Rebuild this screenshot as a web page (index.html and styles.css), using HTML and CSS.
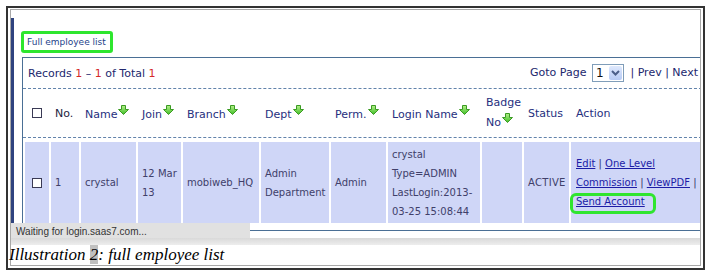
FILE: index.html
```html
<!DOCTYPE html>
<html lang="en">

<head>
 <meta charset="UTF-8">
 <meta name="viewport" content="width=device-width, initial-scale=1.0">
 <title>Illustration 2: full employee list</title>
 <link rel="stylesheet" href="styles.css">
</head>

<body>
 <!-- shared sort arrow -->
 <svg width="0" height="0" style="position:absolute">
  <defs>
   <linearGradient id="arrowFill" x1="0" y1="0" x2="0" y2="1">
    <stop offset="0" stop-color="#b6f08a" />
    <stop offset="1" stop-color="#3fbe27" />
   </linearGradient>
   <symbol id="arrow" viewBox="0 0 11 10">
    <path d="M3.5 0.5H7.5V4.5H10.5L5.5 9.5L0.5 4.5H3.5Z" fill="url(#arrowFill)" stroke="#3a9a22" stroke-width="1" stroke-linejoin="round" />
   </symbol>
  </defs>
 </svg>

 <div class="frame">
  <div class="shot">
   <div class="viewport">
    <div class="page">
     <a href="#" class="page-title">Full employee list</a>

     <div class="listbox">
      <div class="pager">
       <div>Records <span class="num">1</span> &ndash; <span class="num">1</span> of Total <span class="num">1</span></div>
       <div>
        Goto Page
        <span class="select">
         <span class="select-val">1</span>
         <span class="select-btn">
          <svg width="13" height="14" viewBox="0 0 13 14"><path d="M3 5L6.5 8.5L10 5" fill="none" stroke="#4b5f8a" stroke-width="2" /></svg>
         </span>
        </span>
        | <a href="#">Prev</a> | <a href="#">Next</a>
       </div>
      </div>

      <div class="grid head">
       <div class="center"><span class="chk"></span></div>
       <div class="plain">No.</div>
       <div><a href="#">Name</a><svg class="sort"><use href="#arrow" /></svg></div>
       <div><a href="#">Join</a><svg class="sort"><use href="#arrow" /></svg></div>
       <div><a href="#">Branch</a><svg class="sort"><use href="#arrow" /></svg></div>
       <div><a href="#">Dept</a><svg class="sort"><use href="#arrow" /></svg></div>
       <div><a href="#">Perm.</a><svg class="sort"><use href="#arrow" /></svg></div>
       <div><a href="#">Login Name</a><svg class="sort"><use href="#arrow" /></svg></div>
       <div class="two-line"><a href="#">Badge<br>No</a><svg class="sort"><use href="#arrow" /></svg></div>
       <div>Status</div>
       <div class="act-head">Action</div>
      </div>

      <div class="grid row">
       <div class="center"><span class="chk"></span></div>
       <div>1</div>
       <div>crystal</div>
       <div>12 Mar 13</div>
       <div>mobiweb_HQ</div>
       <div>Admin Department</div>
       <div>Admin</div>
       <div>crystal<br>Type=ADMIN<br>LastLogin:2013-<br>03-25 15:08:44</div>
       <div></div>
       <div class="status-cell">ACTIVE</div>
       <div class="actions">
        <p>
         <a href="#">Edit</a> | <a href="#">One Level<br>Commission</a> | <a href="#">ViewPDF</a> |<br>
         <span class="mark"><a href="#">Send Account</a></span>
        </p>
       </div>
      </div>
     </div>
    </div>

    <div class="statusbar">Waiting for login.saas7.com...</div>
   </div>
   <div class="band"></div>
   <div class="caption">Illustration <span class="field">2</span>: full employee list</div>
  </div>
 </div>
</body>

</html>
```

FILE: styles.css
```css
body {
 margin: 0;
 background-color: #fff;
 font-family: "DejaVu Sans", Verdana, sans-serif;
}

a {
 color: inherit;
 text-decoration: none;
}

.frame {
 margin: 6px 0 0 6px;
 width: 695px;
 height: 260px;
 border: 2px solid #333;
}

.shot {
 margin: 1px 2px 2px 2px;
 border: 1px solid #a8a8a8;
}

.viewport {
 position: relative;
 height: 228px;
 overflow: hidden;
}

.page {
 margin-top: 8px;
 min-height: 260px;
 border-left: 3px solid #2f437e;
 padding: 13px 0 0 7px;
}

.page-title {
 display: block;
 width: max-content;
 border: 3px solid #2ee62e;
 border-radius: 3px;
 padding: 3px 4px 2px 3px;
 font-size: 9px;
 line-height: 11px;
 color: #24428a;
}

.listbox {
 margin: 4px -12px 0 1px;
 padding-bottom: 7px;
 border: 1px solid #4a6f95;
 border-right: none;
}

.pager {
 display: flex;
 justify-content: space-between;
 align-items: center;
 height: 30px;
 padding: 0 14px 0 5px;
 border-bottom: 1px dashed #6283ab;
 font-size: 11px;
 color: #22286e;
}

.num {
 color: #d42a2a;
}

/* fake XP style dropdown */
.select {
 display: inline-flex;
 vertical-align: middle;
 box-sizing: border-box;
 width: 32px;
 height: 18px;
 margin: 0 3px 0 2px;
 border: 1px solid #7f9db9;
 background-color: #fff;
}

.select-val {
 flex: 1;
 padding-left: 3px;
 font-size: 12px;
 line-height: 16px;
 color: #111;
}

.select-btn {
 width: 13px;
 margin: 1px;
 border-radius: 2px;
 background: linear-gradient(#dfe9fd, #b7cbf5);
}

.select-btn svg {
 display: block;
}

.grid {
 display: grid;
 grid-template-columns: 24px 28px 55px 43px 76px 68px 55px 92px 40px 45px 1fr;
 column-gap: 2px;
 padding: 0 2px;
}

.grid > div {
 padding-left: 4px;
}

.grid > .center {
 padding-left: 0;
 display: flex;
 justify-content: center;
 align-items: center;
}

.chk {
 display: inline-block;
 box-sizing: border-box;
 width: 10px;
 height: 10px;
 border: 1px solid #3a3a55;
 background-color: #fff;
}

.head {
 height: 48px;
 align-items: center;
 border-bottom: 1px dashed #6283ab;
 font-size: 11px;
 color: #262f7e;
 white-space: nowrap;
}

.head .plain {
 color: #232340;
}

.head .two-line {
 line-height: 20px;
}

.head .act-head {
 padding-left: 5px;
}

.sort {
 width: 11px;
 height: 10px;
 margin-left: 1px;
 vertical-align: 3px;
}

.row {
 margin-top: 4px;
 height: 81px;
 font-size: 10px;
 line-height: 19px;
 color: #40406a;
}

.row > div {
 display: flex;
 align-items: center;
 background-color: #cfd6f7;
}

.status-cell {
 letter-spacing: 0.3px;
}

.row > .actions {
 padding-left: 5px;
 color: #333366;
 white-space: nowrap;
}

.actions p {
 margin: 0;
}

.actions a {
 color: #1c1ca6;
 text-decoration: underline;
}

/* green highlight drawn over the screenshot */
.mark {
 padding: 0 8px 4px 3px;
 margin: 0 -8px 0 -3px;
 outline: 3px solid #2fe52f;
 border-radius: 3px;
}

.statusbar {
 position: absolute;
 left: 0;
 bottom: 0;
 width: 234px;
 height: 15px;
 padding-left: 5px;
 background-color: #e1e1e1;
 font-family: "Liberation Sans", Arial, sans-serif;
 font-size: 10px;
 line-height: 17px;
 color: #333;
}

.band {
 height: 7px;
 background: linear-gradient(#d9d9d9, #ededed);
}

.caption {
 height: 20px;
 margin-left: -2px;
 font-family: "Liberation Serif", serif;
 font-style: italic;
 font-size: 17px;
 line-height: 20px;
 color: #000;
}

.field {
 background-color: #c0c0c0;
}
```
